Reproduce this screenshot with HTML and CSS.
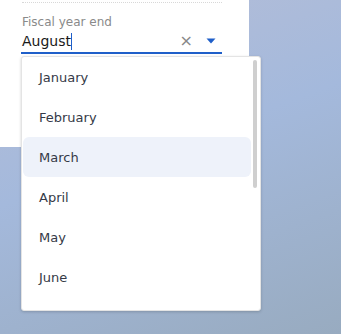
FILE: index.html
```html
<!DOCTYPE html>
<html>
<head>
<meta charset="utf-8">
<link rel="stylesheet" href="styles.css">
</head>
<body>
<div class="stage">
  <div class="panel">
    <div class="dots"></div>
    <div class="field">
      <div class="label">Fiscal year end</div>
      <div class="input">
        <span class="value">August</span><span class="cursor"></span>
        <span class="clear">×</span>
        <svg class="caret" width="10" height="6" viewBox="0 0 10 6"><path d="M0.5 0.5 L9.5 0.5 L5 5.5 Z" fill="#1f5fc9"/></svg>
      </div>
    </div>
  </div>
  <div class="menu">
    <ul class="list">
      <li class="item">January</li>
      <li class="item">February</li>
      <li class="item active">March</li>
      <li class="item">April</li>
      <li class="item">May</li>
      <li class="item">June</li>
    </ul>
    <div class="scrollbar"></div>
  </div>
</div>
</body>
</html>
```
FILE: styles.css
```css
html, body {
  margin: 0;
  padding: 0;
  height: 100%;
}
body {
  font-family: "DejaVu Sans", "Noto Sans", sans-serif;
  background: linear-gradient(160deg, #b6bed7 0%, #a4b9dc 45%, #98abc0 100%);
  overflow: hidden;
}
.stage {
  position: relative;
  width: 341px;
  height: 334px;
}
.panel {
  width: 249px;
  height: 147px;
  background: #fff;
  box-sizing: border-box;
  padding: 2px 27px 0 21px;
}
.dots {
  border-top: 1px dotted #d8d8d8;
  margin-left: 1px;
}
.field {
  padding-top: 11px;
}
.label {
  font-size: 12px;
  color: #8a8a8a;
  line-height: 16px;
  padding-left: 1px;
}
.input {
  display: flex;
  align-items: center;
  height: 22px;
  border-bottom: 2px solid #1f5fc9;
  padding-left: 1px;
}
.value {
  font-size: 14px;
  color: #1a1a1a;
}
.cursor {
  width: 1px;
  height: 17px;
  background: #1f5fc9;
  margin-left: 0;
}
.clear {
  margin-left: auto;
  color: #888;
  font-size: 16px;
  line-height: 16px;
  margin-right: 13px;
}
.caret {
  margin-right: 6px;
}
.menu {
  position: absolute;
  left: 21px;
  top: 56px;
  width: 240px;
  height: 255px;
  background: #fff;
  border: 1px solid #e4e4e4;
  border-radius: 3px;
  box-sizing: border-box;
  box-shadow: 0 1px 3px rgba(0, 0, 0, 0.18);
  overflow: hidden;
}
.list {
  list-style: none;
  margin: 0;
  padding: 0 9px 0 1px;
}
.item {
  height: 40px;
  line-height: 41px;
  padding-left: 16px;
  font-size: 13px;
  color: #353a47;
  border-radius: 6px;
}
.item.active {
  background: #eef2fa;
}
.scrollbar {
  position: absolute;
  right: 3px;
  top: 3px;
  width: 4px;
  height: 128px;
  background: #cfcfcf;
  border-radius: 2px;
}
```
